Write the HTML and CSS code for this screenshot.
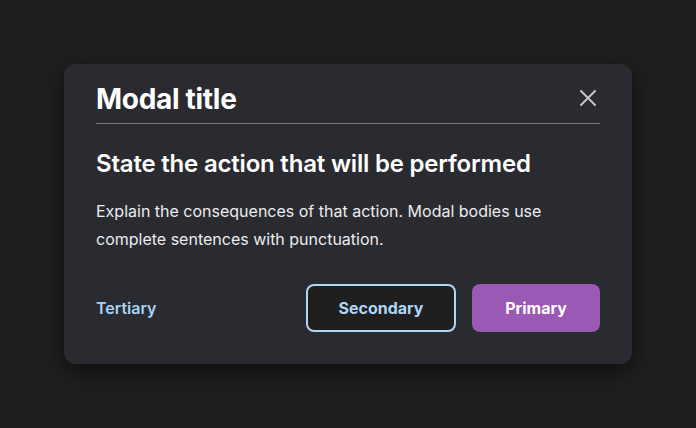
FILE: index.html
```html
<!DOCTYPE html>
<html>
<head>
<meta charset="utf-8">
<link rel="stylesheet" href="styles.css">
</head>
<body>
<div class="page">
  <div class="modal">
    <div class="header">
      <h1 class="title">Modal title</h1>
      <button class="close" aria-label="Close">
        <svg width="16" height="16" viewBox="0 0 16 16"><path d="M1 1L15 15M15 1L1 15" stroke="#c4c4c8" stroke-width="2" stroke-linecap="round"/></svg>
      </button>
    </div>
    <div class="divider"></div>
    <h2 class="heading">State the action that will be performed</h2>
    <p class="body">Explain the consequences of that action. Modal bodies use complete sentences with punctuation.</p>
    <div class="footer">
      <button class="btn tertiary">Tertiary</button>
      <div class="right">
        <button class="btn secondary">Secondary</button>
        <button class="btn primary">Primary</button>
      </div>
    </div>
  </div>
</div>
</body>
</html>
```
FILE: styles.css
```css
html, body { margin: 0; padding: 0; }
body { background: #1f1f20; font-family: Inter, "Open Sans", sans-serif; }
.page { width: 696px; height: 428px; display: flex; align-items: center; justify-content: center; }
.modal {
  width: 568px; box-sizing: border-box; padding: 19px 32px 32px;
  background: #2a2b31; border-radius: 12px;
  box-shadow: 0 8px 24px rgba(0,0,0,0.55);
  color: #fff;
}
.header { display: flex; justify-content: space-between; align-items: flex-start; height: 32px; }
.title { margin: 0; font-size: 28px; font-weight: 700; line-height: 32px; letter-spacing: -0.3px; }
.close { background: none; border: 0; padding: 0; margin: 7px 4px 0 0; width: 16px; height: 16px; display: flex; cursor: pointer; }
.divider { height: 1px; background: #76767c; margin-top: 8px; }
.heading { margin: 24px 0 0; font-size: 24px; font-weight: 600; line-height: 32px; letter-spacing: -0.2px; }
.body { margin: 17px 0 0; font-size: 16px; line-height: 28px; color: #ececee; max-width: 470px; }
.footer { display: flex; justify-content: space-between; align-items: center; margin-top: 31px; }
.right { display: flex; gap: 16px; }
.btn { font-family: inherit; font-size: 16px; font-weight: 700; height: 48px; border-radius: 8px; cursor: pointer; }
.tertiary { background: none; border: 0; padding: 0; color: #a9d3f5; font-weight: 600; }
.secondary { width: 150px; background: #1f1f20; border: 2px solid #aed6f5; color: #aed6f5; }
.primary { width: 128px; background: #9b59b6; border: 0; color: #fff; }
```
